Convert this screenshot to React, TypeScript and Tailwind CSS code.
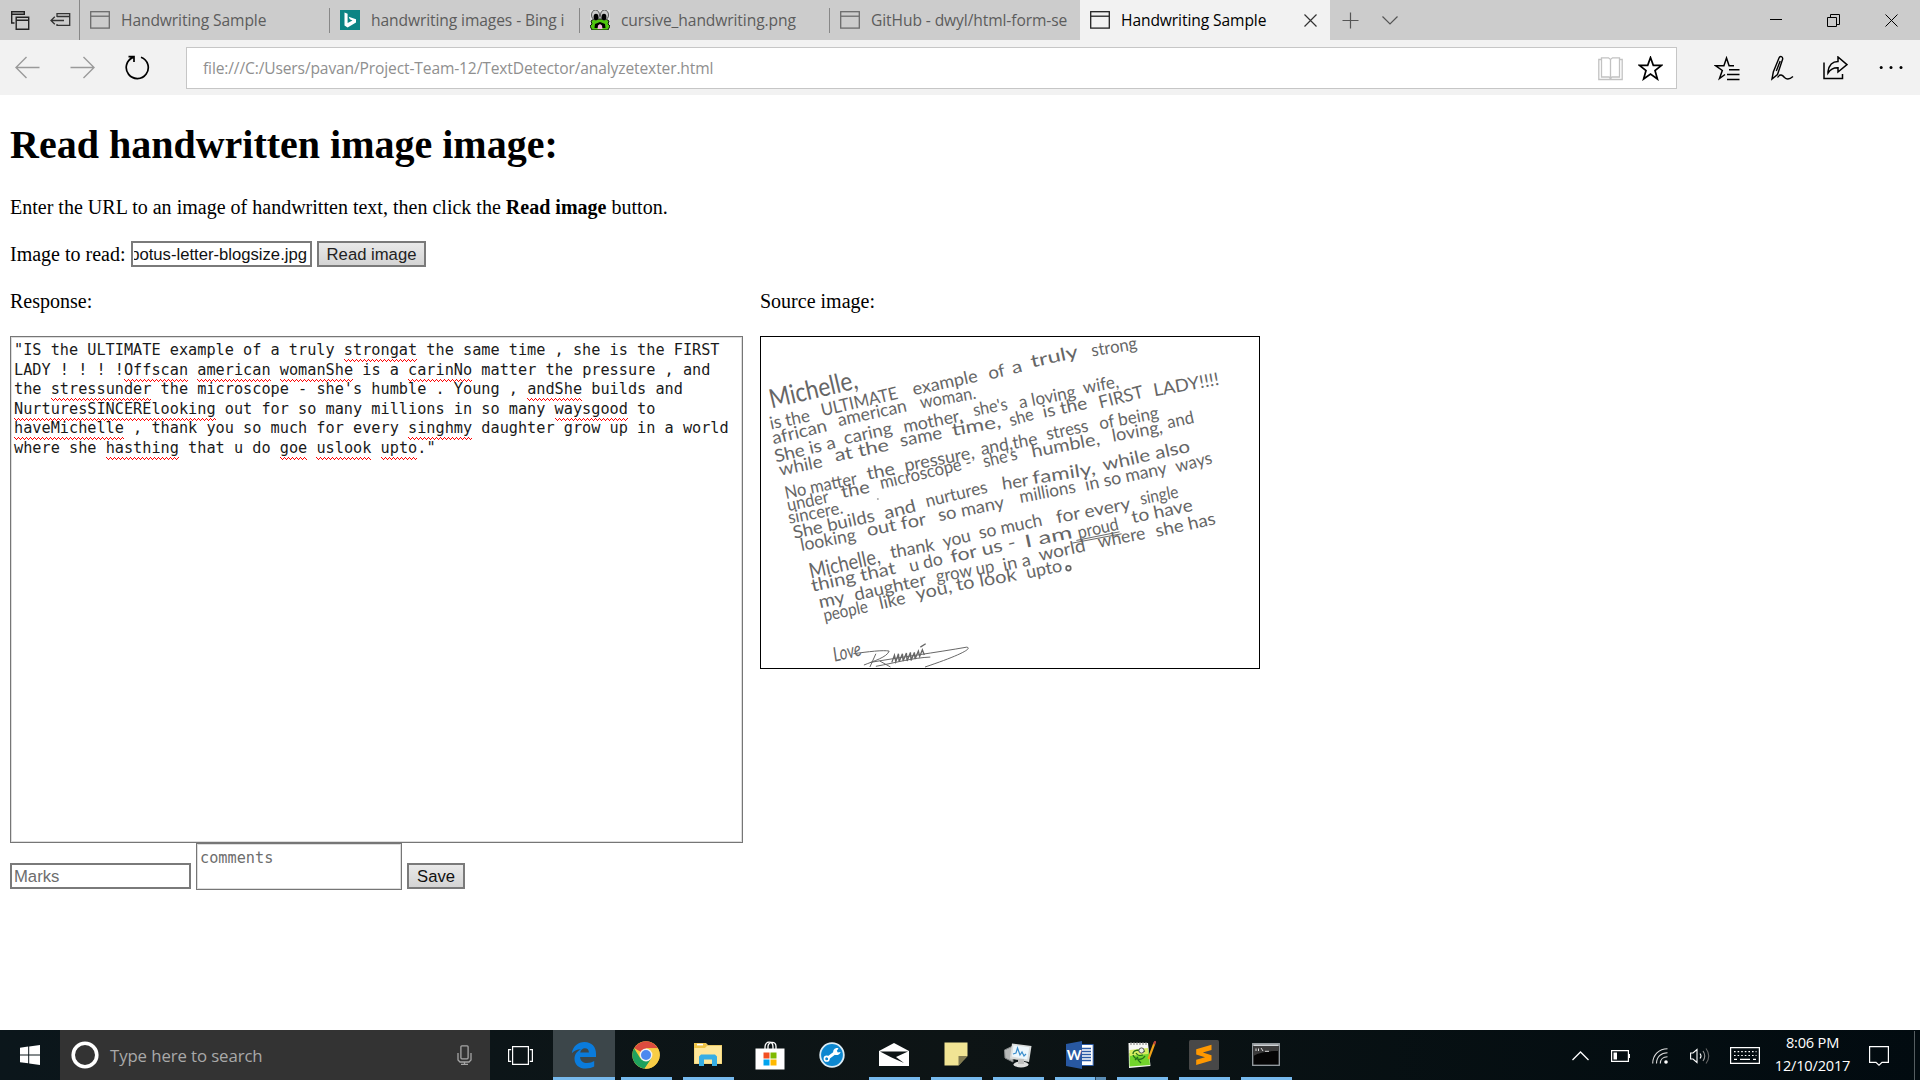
import React from "react";

type Chunk = [string, number, number, number, number, number?];

const letter: Chunk[] = [
  ["Michelle,", 62, 264, 325, 202, 80],
  ["is the", 60, 327, 180, 302], ["ULTIMATE", 215, 287, 445, 234], ["example", 490, 224, 685, 182], ["of", 718, 176, 768, 165], ["a", 790, 160, 820, 152], ["truly", 846, 140, 988, 109], ["strong", 1028, 107, 1165, 84],
  ["african", 68, 372, 232, 332], ["american", 265, 317, 472, 272], ["woman.", 512, 264, 680, 234],
  ["She is a", 75, 427, 258, 382], ["caring", 283, 372, 428, 340], ["mother,", 462, 337, 640, 302], ["she's", 672, 287, 775, 267], ["a loving", 810, 264, 980, 230], ["wife,", 1003, 219, 1110, 200],
  ["while", 88, 467, 218, 440], ["at the", 255, 424, 418, 390], ["same", 452, 379, 578, 354], ["time,", 608, 347, 755, 320], ["she", 783, 317, 855, 297], ["is the", 882, 292, 1015, 264], ["FIRST", 1052, 264, 1185, 230], ["LADY!!!!", 1215, 227, 1412, 192],
  ["No matter", 105, 537, 322, 492], ["the", 352, 479, 435, 462], ["pressure,", 465, 454, 675, 414], ["and,the", 695, 404, 865, 372], ["stress", 893, 359, 1018, 332], ["of being", 1052, 327, 1230, 294],
  ["under", 112, 574, 237, 547], ["the", 275, 534, 360, 517], ["microscope -", 392, 507, 668, 442], ["she's", 703, 442, 805, 417], ["humble,", 848, 412, 1053, 372], ["loving,", 1090, 364, 1242, 337], ["and", 1257, 324, 1337, 307],
  ["sincere.", 115, 612, 280, 580],
  ["She builds", 130, 657, 375, 604], ["and", 405, 598, 500, 574], ["nurtures", 530, 562, 715, 517], ["her", 758, 509, 838, 497], ["family,", 850, 492, 1040, 462], ["while also", 1063, 452, 1325, 394],
  ["looking", 152, 694, 318, 662], ["out for", 352, 649, 530, 614], ["so many", 567, 604, 765, 564], ["millions", 812, 549, 980, 517], ["in so many", 1010, 512, 1255, 460], ["ways", 1283, 457, 1392, 429],
  ["Michelle,", 180, 777, 392, 730, 64], ["thank", 422, 716, 555, 692], ["you", 582, 684, 665, 664], ["so much", 690, 657, 880, 617], ["for every", 922, 610, 1145, 568], ["single", 1175, 554, 1290, 532],
  ["thing that", 185, 817, 438, 762], ["u do", 480, 757, 580, 734], ["for us -", 605, 730, 800, 684], ["I am", 828, 684, 970, 654], ["proud", 988, 657, 1110, 629], ["to have", 1150, 610, 1333, 572],
  ["my", 208, 867, 285, 850], ["daughter", 315, 844, 530, 797], ["grow up", 560, 789, 735, 757], ["in a", 762, 754, 845, 737], ["world", 870, 724, 1010, 694], ["where", 1048, 684, 1190, 657], ["she has", 1222, 652, 1402, 612],
  ["people", 222, 907, 355, 878], ["like", 390, 870, 468, 852], ["you,", 500, 842, 608, 818], ["to look", 620, 814, 802, 782], ["upto", 832, 777, 940, 755],
  ["Love", 252, 1028, 335, 1008, 60],
];

function Letter() {
  return (
    <svg viewBox="30 48 1500 999" className="block w-full h-full" fill="none" preserveAspectRatio="none">
      {letter.map(([t, x1, y1, x2, y2, size], i) => (
        <text
          key={i}
          transform={`translate(${x1} ${y1}) rotate(${(Math.atan2(y2 - y1, x2 - x1) * 180) / Math.PI})`}
          fontSize={size ?? 53}
          fontWeight="400"
          fontStyle={i === letter.length - 1 ? "italic" : "normal"}
          textLength={Math.hypot(x2 - x1, y2 - y1)}
          lengthAdjust="spacingAndGlyphs"
          fill="#666"
          fontFamily="Lato, sans-serif"
        >
          {t}
        </text>
      ))}
      <g stroke="#666" strokeWidth="3">
        <path d="M980 662L1110 636M968 670L1116 642" />
        <circle cx="956" cy="746" r="7" strokeWidth="5" />
        <path d="M308 1004C350 998 400 992 416 996C410 1014 370 1026 340 1038M376 1004L358 1044M388 1026L420 1044M360 1030C440 1016 560 1000 650 984C670 988 620 1012 524 1044M376 1042C440 1030 490 1016 540 1014" />
        <path strokeWidth="4" d="M424 1030L432 1008L436 1028L444 1004L446 1028L456 1004L458 1026L468 1002L470 1026L480 1000L482 1024L492 1000L494 1020L504 996L508 1012L516 992L522 1008M510 984L526 974" />
      </g>
      <circle cx="382" cy="537" r="3" fill="#aaa" />
    </svg>
  );
}

function PageIcon({ active = false }: { active?: boolean }) {
  return (
    <svg width="20" height="18" viewBox="0 0 20 18" className="shrink-0" fill="none" stroke={active ? "#222" : "#6b6b6b"} strokeWidth="1.3">
      <rect x=".7" y=".7" width="18.6" height="16.4" />
      <path d="M1 5.2H19" />
    </svg>
  );
}

function Bing() {
  return (
    <svg width="20" height="20" viewBox="0 0 20 20" className="shrink-0">
      <rect width="20" height="20" fill="#0c8484" />
      <path d="M4.5 2.5L7.6 3.8V13L12.5 10.4L9.8 9.2L8.7 6.8L16 9.2V12.6L7.6 17.4L4.5 15.6Z" fill="#fff" />
    </svg>
  );
}

function Frog() {
  return (
    <svg width="20" height="20" viewBox="0 0 20 20" className="shrink-0">
      <rect width="20" height="20" fill="#dcdcdc" />
      <path d="M1 11L4 9H16L19 11L18 14L20 16L18 20H2L0 16L2 14Z" fill="#4fc40f" stroke="#111" />
      <ellipse cx="5.5" cy="5" rx="4" ry="5" fill="#ccc" stroke="#555" />
      <ellipse cx="14.5" cy="5" rx="4" ry="5" fill="#ccc" stroke="#555" />
      <ellipse cx="6" cy="7" rx="2.4" ry="3.3" />
      <ellipse cx="14" cy="7" rx="2.4" ry="3.3" />
      <path d="M4.5 18L5 14L10 12L15 14L15.5 18Z" />
      <path d="M7.5 19L8 15.5L10 14L12 15.5L12.5 19Z" fill="#f3b6e2" />
    </svg>
  );
}

function Tab({ icon, title, active = false, divider = true }: { icon: React.ReactNode; title: string; active?: boolean; divider?: boolean }) {
  return (
    <div className={`flex h-10 w-[250px] shrink-0 items-center pl-[10px] ${active ? "bg-[#f2f2f2] text-black" : "text-[#5c5c5c]"}`}>
      {icon}
      <span className="ml-[11px] w-[198px] overflow-hidden whitespace-nowrap pt-0.5 text-[15.6px] tracking-[-0.1px]">{title}</span>
      {active && (
        <svg width="13" height="13" viewBox="0 0 13 13" className="-ml-[15px] shrink-0" stroke="#333" strokeWidth="1.2">
          <path d="M.5 .5L12.5 12.5M12.5 .5L.5 12.5" />
        </svg>
      )}
      {!active && divider && <span className="ml-auto h-[25px] w-px bg-[#888]" />}
    </div>
  );
}

function Browser() {
  return (
    <header className="h-[95px] bg-[#f2f2f2] font-['Open_Sans',sans-serif]">
      <div className="flex h-10 bg-[#cccccc]">
        <div className="flex w-20 items-center border-r border-[#888] pl-[11px]">
          <svg width="19" height="19" viewBox="0 0 19 19" fill="none" stroke="#222" strokeWidth="1.4">
            <path d="M3.5 12H.7V.7H13.3V4M1 3.3H13" />
            <path d="M4.5 13.5V6.2H15" stroke="none" />
            <path d="M5.2 6.2H17.7V18.2H5.2ZM5 9.3H18" />
          </svg>
          <svg width="21" height="15" viewBox="0 0 21 15" className="ml-5" fill="none" stroke="#333" strokeWidth="1.3">
            <path d="M7 4V.7H19.7V12.3H7V11M7 3.5H20M14 7.5H1M4.8 3.7L1 7.5L4.8 11.3" />
          </svg>
        </div>
        <Tab icon={<PageIcon />} title="Handwriting Sample" />
        <Tab icon={<Bing />} title="handwriting images - Bing i" />
        <Tab icon={<Frog />} title="cursive_handwriting.png" />
        <Tab icon={<PageIcon />} title="GitHub - dwyl/html-form-se" divider={false} />
        <Tab icon={<PageIcon active />} title="Handwriting Sample" active />
        <div className="flex items-center pl-3">
          <svg width="17" height="17" viewBox="0 0 17 17" stroke="#555" strokeWidth="1.2"><path d="M8.5 .5V16.5M.5 8.5H16.5" /></svg>
          <svg width="16" height="9" viewBox="0 0 16 9" className="ml-[23px]" fill="none" stroke="#555" strokeWidth="1.2"><path d="M.5 .5L8 8L15.5 .5" /></svg>
        </div>
        <div className="ml-auto flex items-center gap-[45px] pr-[22px]">
          <svg width="12" height="12" viewBox="0 0 12 12" stroke="#000"><path d="M0 5.5H12" /></svg>
          <svg width="13" height="13" viewBox="0 0 13 13" fill="none" stroke="#000"><path d="M.5 3.5H9.5V12.5H.5ZM3.5 3V.5H12.5V10.5H10" /></svg>
          <svg width="13" height="13" viewBox="0 0 13 13" stroke="#000"><path d="M.5 .5L12.5 12.5M12.5 .5L.5 12.5" /></svg>
        </div>
      </div>
      <div className="flex h-[55px] items-center">
        <div className="flex w-[186px] items-center pl-[15px]">
          <svg width="25" height="23" viewBox="0 0 25 23" fill="none" stroke="#9a9a9a" strokeWidth="1.4"><path d="M24.5 11.5H1M11.5 1L1 11.5L11.5 22" /></svg>
          <svg width="25" height="23" viewBox="0 0 25 23" className="ml-[30px]" fill="none" stroke="#9a9a9a" strokeWidth="1.4"><path d="M.5 11.5H24M13.5 1L24 11.5L13.5 22" /></svg>
          <svg width="25" height="25" viewBox="0 0 25 25" className="ml-[30px]" fill="none" stroke="#000" strokeWidth="1.7"><path d="M16 2.2A11 11 0 1 1 8 2.4M3.5 1.6H9V7" /></svg>
        </div>
        <div className="flex h-[42px] w-[1491px] items-center border border-[#c6c6c6] bg-white pl-4 pr-[13px]">
          <span className="pt-[3px] text-[15.6px] tracking-[-0.14px] text-[#8f8f8f]">file:///C:/Users/pavan/Project-Team-12/TextDetector/analyzetexter.html</span>
          <svg width="25" height="24" viewBox="0 0 25 24" className="ml-auto mt-0.5" fill="none" stroke="#c2c2c2" strokeWidth="1.3">
            <path d="M3.5 2.5V20H11L12.5 21.5L14 20H21.5V2.5M12.5 3V21M3.5 2.5V.8H10.5L12.5 2.5L14.5 .8H21.5V2.5M3.5 2.5H.8V22.5H24.2V2.5H21.5" />
          </svg>
          <svg width="25" height="25" viewBox="0 0 25 25" className="ml-[15px] mt-0.5" fill="none" stroke="#000" strokeWidth="1.7">
            <path d="M12.5 1.5L15.3 9.3H23.5L17 14.5L19.4 23L12.5 18L5.6 23L8 14.5L1.5 9.3H9.7Z" />
          </svg>
        </div>
        <div className="flex flex-1 items-center pl-[37px]">
          <svg width="26" height="25" viewBox="0 0 26 25" className="mt-0.5" fill="none" stroke="#000" strokeWidth="1.5">
            <path d="M20 9.8H15.1L12.5 2L9.9 9.8H1.8L8.3 14.5L5.5 22.5L11 18.5M15 13.7H25.5M13 18.6H25.5M13 23.5H25.5" />
          </svg>
          <svg width="24" height="26" viewBox="0 0 24 26" className="ml-[30px]" fill="none" stroke="#000" strokeWidth="1.4">
            <path d="M2 24L3.3 17L9 3C10 .5 13.2 1.5 12.6 4.3L7.5 19.5L2 24ZM10.2 6L6.3 16" />
            <path d="M7.5 22.5C10 18.5 12.5 20 14.5 22.5C16.5 24.5 19 25 23 21.5" />
          </svg>
          <svg width="25" height="24" viewBox="0 0 25 24" className="ml-[29px]" fill="none" stroke="#000" strokeWidth="1.5">
            <path d="M1 6.5V22.5H19.5V18" />
            <path d="M5 15.5C6 9 10 5.5 15 5.5V1L24 8.7L15 16V11.7C10.5 11.5 7.5 13 5 17Z" />
          </svg>
          <svg width="25" height="5" viewBox="0 0 25 5" className="ml-[31px]"><circle cx="2.2" cy="2.5" r="1.5" /><circle cx="12" cy="2.5" r="1.5" /><circle cx="22" cy="2.5" r="1.5" /></svg>
        </div>
      </div>
    </header>
  );
}

/* Misspelt word with a three pixel high red zigzag beneath it. */
const W = ({ children }: { children: string }) => (
  <span className="pb-[3px] [background-image:linear-gradient(90deg,red_1px,transparent_1px),linear-gradient(90deg,transparent_1px,red_1px,red_2px,transparent_2px,transparent_3px,red_3px),linear-gradient(90deg,transparent_2px,red_2px,red_3px,transparent_3px)] [background-position:0_calc(100%-2px),0_calc(100%-1px),0_100%] [background-repeat:repeat-x] [background-size:4px_1px]">{children}</span>
);

function Content() {
  return (
    <main className="h-[935px] bg-white pl-[10px] font-['Liberation_Serif',serif] text-[20px] leading-[24px] text-black">
      <h1 className="pt-[27px] text-[40px] font-bold leading-[46px]">Read handwritten image image:</h1>
      <p className="mt-[27px] h-6 tracking-[0.01px]">Enter the URL to an image of handwritten text, then click the <b>Read image</b> button.</p>
      <div className="mt-[21px] flex h-[27px] items-center">
        <span className="w-[121px] whitespace-nowrap">Image to read:</span>
        <div className="flex h-[26px] w-[181px] items-center justify-end overflow-hidden whitespace-nowrap border-2 border-[#7a7a7a] pr-[3px] pt-[2px] font-['Liberation_Sans',sans-serif] text-[16.67px] text-[#111]">
          <div className="flex w-[173px] justify-end overflow-hidden">potus-letter-blogsize.jpg</div>
        </div>
        <button className="ml-[5px] h-[26px] w-[109px] border-2 border-[#7a7a7a] bg-linear-to-b from-[#e9e9e9] to-[#d4d4d4] pt-px font-['Liberation_Sans',sans-serif] text-[16.67px] leading-[21px] text-[#222]">Read image</button>
      </div>
      <div className="flex">
        <section className="w-[750px]">
          <p className="mt-[22px] h-6">Response:</p>
          <div className="mt-[23px] h-[507px] w-[733px] whitespace-pre border border-[#767676] px-[3px] pt-[4px] font-['DejaVu_Sans_Mono',monospace] text-[15.22px] leading-[19.6px] text-[#1a1a1a] shadow-[inset_0_0_0_1px_#dddddd]">
            <div>"IS the ULTIMATE example of a truly <W>strongat</W> the same time , she is the FIRST</div>
            <div>LADY ! ! ! !<W>Offscan</W> <W>american</W> <W>womanShe</W> is a <W>carinNo</W> matter the pressure , and</div>
            <div>the <W>stressunder</W> the microscope - she's humble . Young , <W>andShe</W> builds and</div>
            <div><W>NurturesSINCERElooking</W> out for so many millions in so many <W>waysgood</W> to</div>
            <div><W>haveMichelle</W> , thank you so much for every <W>singhmy</W> daughter grow up in a world</div>
            <div>where she <W>hasthing</W> that u do <W>goe</W> <W>uslook</W> <W>upto</W>."</div>
          </div>
          <div className="flex h-[47px] items-end">
            <div className="mb-px h-[26px] w-[181px] border-2 border-[#7a7a7a] pl-[2px] pt-px font-['Liberation_Sans',sans-serif] text-[16.67px] leading-[21px] text-[#6d6d6d]">Marks</div>
            <div className="ml-[5px] h-[47px] w-[206px] border border-[#767676] pl-[3px] pt-[4px] font-['DejaVu_Sans_Mono',monospace] text-[15.22px] leading-[20px] text-[#6d6d6d] shadow-[inset_0_0_0_1px_#dddddd]">comments</div>
            <button className="mb-px ml-[5px] h-[26px] w-[58px] border-2 border-[#7a7a7a] bg-linear-to-b from-[#e9e9e9] to-[#d4d4d4] pt-px font-['Liberation_Sans',sans-serif] text-[16.67px] leading-[21px] text-[#111]">Save</button>
          </div>
        </section>
        <section>
          <p className="mt-[22px] h-6">Source image:</p>
          <div className="mt-[23px] h-[333px] w-[500px] border border-black"><Letter /></div>
        </section>
      </div>
    </main>
  );
}

function Slot({ children, state = "run" }: { children?: React.ReactNode; state?: "run" | "idle" | "active" | "stack" }) {
  return (
    <div className={`flex h-[50px] w-[62px] shrink-0 flex-col items-center ${state === "active" ? "bg-[#3c464a]" : ""}`}>
      <div className="flex h-[47px] items-center justify-center pt-[3px]">{children}</div>
      {state === "active" && <div className="h-[3px] w-full bg-[#76b9ed]" />}
      {state === "run" && <div className="h-[3px] w-[51px] bg-[#76b9ed]" />}
      {state === "stack" && <div className="flex h-[3px] w-[51px]"><div className="w-10 bg-[#76b9ed]" /><div className="flex-1 border-l border-[#27455c] bg-[#5a8db5]" /></div>}
    </div>
  );
}

function Taskbar() {
  return (
    <footer className="flex h-[50px] bg-linear-to-r from-[#0b161b] via-[#0d1415] to-[#020b10] font-['Open_Sans',sans-serif] text-white">
      <div className="flex w-[60px] items-center justify-center">
        <svg width="20" height="20" viewBox="0 0 20 20" fill="#fff"><path d="M0 2.8L8.2 1.6V9.4H0ZM9.2 1.5L20 0V9.4H9.2ZM0 10.4H8.2V18.3L0 17.2ZM9.2 10.4H20V20L9.2 18.5Z" /></svg>
      </div>
      <div className="flex w-[430px] items-center bg-[#333333] pl-[11px]">
        <svg width="28" height="28" viewBox="0 0 28 28" fill="none"><circle cx="14" cy="14" r="11.8" stroke="#fff" strokeWidth="3.6" /></svg>
        <span className="ml-[11px] pt-px text-[16.8px] tracking-[-0.1px] text-[#a9a9a9]">Type here to search</span>
        <svg width="15" height="20" viewBox="0 0 15 20" className="ml-auto mr-[18px]" fill="none" stroke="#a5a5a5" strokeWidth="1.3"><rect x="3.9" y=".8" width="7.2" height="13" rx="1" /><path d="M1 8V15L3 17H12L14 15V8M7.5 17V19.3M4 19.3H11" /></svg>
      </div>
      <div className="flex w-[63px] items-center pl-[18px]">
        <svg width="25" height="19" viewBox="0 0 25 19" fill="none" stroke="#fff" strokeWidth="1.2"><path d="M4.6 .6H20.4V18.4H4.6ZM3.2 3.6H.6V15.4H3.2M21.8 3.6H24.4V15.4H21.8" /></svg>
      </div>
      <Slot state="active">
        <svg width="26" height="28" viewBox="0 0 26 28"><path fill="#0a7bdc" d="M.8 12.2C2 5.2 7 1 13.5 1C20.8 1 25 6 25 12.6V16H9.1C9.3 20 12.2 22 16 22C18.9 22 21.2 21.2 23.2 20V25.5C21 26.8 18 27.5 14.8 27.5C8 27.5 3.5 23.8 3.5 17.7C3.5 13.3 6 10 10 8.2C5.8 8.2 2.6 10 .8 12.2ZM9.2 11.6H17.9C17.9 8.8 16.4 7.3 13.8 7.3C11.5 7.3 9.7 9 9.2 11.6Z" /></svg>
      </Slot>
      <Slot>
        <svg width="28" height="28" viewBox="0 0 28 28">
          <circle cx="14" cy="14" r="13.7" fill="#f7ca3c" />
          <path d="M14 14L2.2 7.1A13.7 13.7 0 0 1 25.9 7.3H14Z" fill="#dc4c3f" />
          <path d="M2.1 7.2L8.4 17.5L14 20L12.6 27.6A13.7 13.7 0 0 1 2.1 7.2Z" fill="#1fa15d" />
          <path d="M19.5 17.5L12.6 27.6L8.5 17.2L14 14Z" fill="#1fa15d" />
          <path d="M14 7.3H25.9A13.7 13.7 0 0 1 12.8 27.6L19.5 17.5L20 11Z" fill="#f8cd46" />
          <circle cx="14" cy="14" r="6.4" fill="#f2f2f2" /><circle cx="14" cy="14" r="5" fill="#4b88ef" />
        </svg>
      </Slot>
      <Slot>
        <svg width="28" height="24" viewBox="0 0 28 24" className="-mt-0.5"><path d="M0 1H12L14 3H28V22H0Z" fill="#e9c865" /><path d="M.5 1H11L13 4L11 6H.5Z" fill="#f0c445" /><rect x="3" y="1.8" width="6" height="1.6" fill="#fff" /><path d="M.5 6H11L13 4H27.5V21.5H.5Z" fill="#ffe79a" /><path d="M5 24V14.5L7 12.5H21L23 14.5V24H18V17.5H10V24Z" fill="#37aee4" /></svg>
      </Slot>
      <Slot state="idle">
        <svg width="30" height="29" viewBox="0 0 30 29"><path d="M10 9V6C10 -.5 18 -.5 18 6V9M13 9V5.5C13 0 21 0 21 5.5V9" fill="none" stroke="#fff" strokeWidth="1.3" /><path d="M.5 7.5H29.5V28.5H.5Z" fill="#fff" /><path d="M8.5 11.5H14.5V17.5H8.5Z" fill="#f25022" /><path d="M15.5 11.5H21.5V17.5H15.5Z" fill="#7fba00" /><path d="M8.5 18.5H14.5V24.5H8.5Z" fill="#00a4ef" /><path d="M15.5 18.5H21.5V24.5H15.5Z" fill="#ffb900" /></svg>
      </Slot>
      <Slot state="idle">
        <svg width="26" height="26" viewBox="0 0 26 26"><circle cx="13" cy="13" r="11.8" fill="#0c87d0" stroke="#dcecf5" strokeWidth="1.8" /><path d="M9 16L17 10" stroke="#fff" strokeWidth="3" /><circle cx="7.7" cy="16.7" r="2.3" fill="none" stroke="#fff" strokeWidth="1.6" /><path d="M19.5 6.4L17.8 8.8L18.8 10.4L21.6 10C21 13.5 15.3 14.4 14.3 10.8C13.7 7.8 16.5 5.2 19.5 6.4Z" fill="#fff" /></svg>
      </Slot>
      <Slot>
        <svg width="30" height="25" viewBox="0 0 30 25" className="-mt-0.5"><path d="M0 9L15 1L30 9V24H0Z" fill="#fff" /><path d="M1 9.4H29L17 15L25 21L12 15.3Z" fill="#0d1415" /></svg>
      </Slot>
      <Slot>
        <svg width="24" height="24" viewBox="0 0 24 24" className="-mt-0.5"><path d="M.5 .5H23.5V14L14.5 23.5H.5Z" fill="#f1e494" /><path d="M14.5 23.5V14H23.5Z" fill="#817a50" /></svg>
      </Slot>
      <Slot>
        <svg width="28" height="26" viewBox="0 0 28 26"><path d="M.5 8L9 4V20L1 16Z" fill="#b7b9b8" stroke="#858888" /><path d="M8 1.5L27.5 4L25 20L6 16.5Z" fill="#d9dcdb" /><path d="M9.5 3.3L25.3 5.3L23.2 17.5L8 14.5Z" fill="#edf6fb" /><path d="M9 12L12 11L13.5 6L16 13L18 10L20 14L22 12" fill="none" stroke="#398dcc" strokeWidth="1.2" /><ellipse cx="17" cy="22.5" rx="7.5" ry="3" fill="#dedfde" /><path d="M14 17H20V22H14Z" fill="#bfc0bf" /></svg>
      </Slot>
      <Slot state="stack">
        <svg width="28" height="28" viewBox="0 0 28 28"><path d="M14 3.5H27.2V24.5H14Z" fill="#fff" stroke="#2c5ca8" /><path d="M16 7.5H25M16 10.5H25M16 13.5H25M16 16.5H25M16 19.5H25" stroke="#2c5ca8" strokeWidth="1.4" /><path d="M0 3L16 0V28L0 25Z" fill="#2858a2" /><text x="8" y="19" textAnchor="middle" fontFamily="Lato, sans-serif" fontWeight="700" fontSize="14" fill="#fff">W</text></svg>
      </Slot>
      <Slot>
        <svg width="28" height="28" viewBox="0 0 28 28"><path d="M.5 2H20L22.5 25L1 27Z" fill="#f7f8f4" /><path d="M1.5 12L20.5 9L22 24L1.5 25.5Z" fill="#72d42c" /><path d="M1.5 9L20 7V13L1.5 15Z" fill="#d6ec60" /><path d="M5 13C5 9 11 8 14 11L17 10M5 14C7 19 14 20 17 15M8 12C9 14 12 15 15 14M7 19L10 16M10 19L13 22" fill="none" stroke="#24711a" strokeWidth="1.3" /><circle cx="13.5" cy="9.5" r="2.6" fill="#e9ede7" stroke="#555" /><path d="M3 1V4M6 1V4M9 1V4M12 1V4M15 1V4M18 1V4" stroke="#777" /><path d="M26.5 2L20.5 18" stroke="#efa118" strokeWidth="2.2" /><path d="M27.5 0L26 3.4" stroke="#b9423a" strokeWidth="2.2" /></svg>
      </Slot>
      <Slot>
        <svg width="30" height="30" viewBox="0 0 30 30"><rect width="30" height="30" rx="1.5" fill="#484848" /><path d="M7.2 9.2L22.5 4.8V10L13.8 12.6L22.5 15.2V20.5L7.2 25V19.8L16 17.2L7.2 14.6Z" fill="#ff9800" /></svg>
      </Slot>
      <Slot>
        <svg width="28" height="23" viewBox="0 0 28 23" className="-mt-0.5"><rect x=".7" y=".7" width="26.6" height="21.6" fill="#050505" stroke="#99a0a5" strokeWidth="1.3" /><path d="M1.3 1.3H26.7V3H1.3Z" fill="#cfd4d7" /><path d="M1.3 3H26.7V8C16 8 8 9 1.3 13Z" fill="#3b3b3b" /><path d="M4 5.5V8M6.5 5.5V8M9 5L11 8M13 8.3H17" stroke="#ddd" /></svg>
      </Slot>
      <div className="ml-auto flex items-center pt-px">
        <div className="flex w-10 justify-center"><svg width="17" height="10" viewBox="0 0 17 10" fill="none" stroke="#fff" strokeWidth="1.3"><path d="M.5 9L8.5 1L16.5 9" /></svg></div>
        <div className="flex w-10 justify-center"><svg width="19" height="12" viewBox="0 0 19 12" fill="none" stroke="#fff" strokeWidth="1.2"><path d="M.6 .6H17.4V11.4H.6Z" /><path d="M18.4 4V8" /><path d="M2.5 2.5H6V9.5H2.5Z" fill="#fff" stroke="none" /></svg></div>
        <div className="flex w-10 justify-center"><svg width="16" height="16" viewBox="0 0 16 16" fill="none" stroke="#ddd" strokeWidth="1.1"><path d="M.7 15.5C.7 7 7 .7 15.5 .7M4.5 15.5C4.5 9 9 4.7 15.5 4.7M8.3 15.5C8.3 11.5 11 8.7 15.5 8.7" /><circle cx="14" cy="14" r="1.8" fill="#fff" stroke="none" /></svg></div>
        <div className="flex w-10 justify-center"><svg width="21" height="18" viewBox="0 0 21 18" fill="none" stroke="#fff" strokeWidth="1.1"><path d="M.6 6H3L7 2.5V15.5L3 12H.6Z" /><path d="M10 6.5Q12 9 10 11.5" /><path stroke="#999" d="M13 4Q16.5 9 13 14" /><path stroke="#666" d="M16 1.5Q21.5 9 16 16.5" /></svg></div>
        <div className="flex w-[50px] justify-center"><svg width="30" height="17" viewBox="0 0 30 17" fill="none" stroke="#fff" strokeWidth="1.2"><path d="M.6 .6H29.4V16.4H.6Z" /><path strokeDasharray="1.6 2" d="M4 4.7H26.5M4 8.5H26.5" /><path d="M4 12.4H7M10 12.4H20M23 12.4H26" /></svg></div>
        <div className="w-[85px] -translate-y-[2px] text-center text-[14.6px] leading-[23px] tracking-[-0.2px]"><div>8:06 PM</div><div>12/10/2017</div></div>
        <div className="flex w-[48px] justify-center"><svg width="20" height="20" viewBox="0 0 20 20" fill="none" stroke="#fff" strokeWidth="1.2"><path d="M.6 .6H19.4V16.4H13L10 19.2L7 16.4H.6Z" /></svg></div>
        <div className="ml-[11px] h-[50px] w-[6px] border-l border-[#555d61]" />
      </div>
    </footer>
  );
}

export default function App() {
  return (
    <div className="h-[1080px] w-[1920px] overflow-hidden">
      <Browser />
      <Content />
      <Taskbar />
    </div>
  );
}
